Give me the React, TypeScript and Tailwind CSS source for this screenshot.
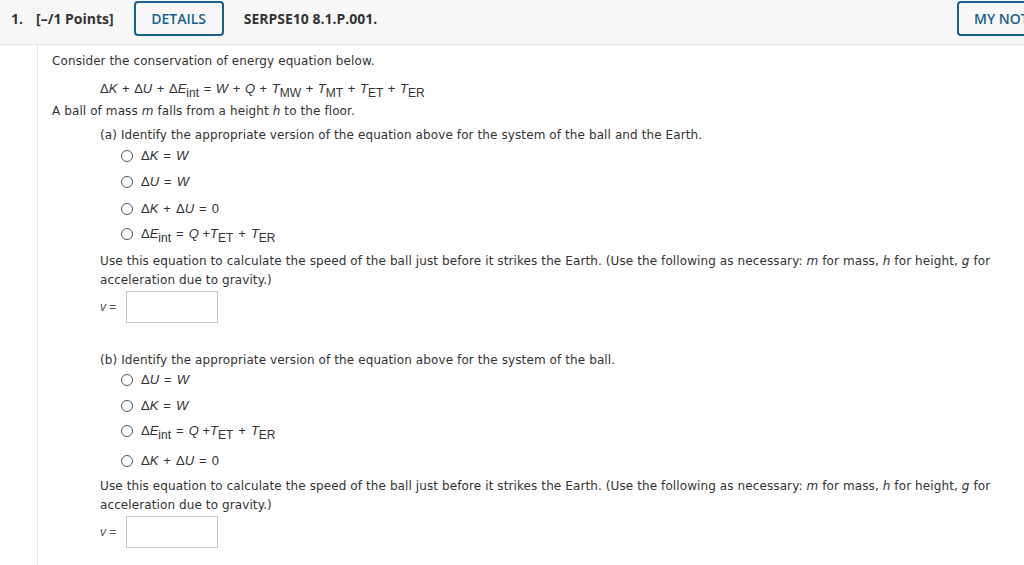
import React from "react";

const body = { fontFamily: '"DejaVu Sans", Verdana, sans-serif' };
const mathF = { fontFamily: '"Liberation Sans", Arial, sans-serif' };

function I({ children }: { children: React.ReactNode }) {
  return <span className="italic">{children}</span>;
}
function Sub({ children }: { children: React.ReactNode }) {
  return <span className="text-[12px] not-italic relative top-[4px]">{children}</span>;
}
function M({ children }: { children: React.ReactNode }) {
  return (
    <span className="text-[13px] text-[#333] leading-[19px]" style={mathF}>
      {children}
    </span>
  );
}
const Op = ({ c }: { c: string }) => <span className="mx-[5px]">{c}</span>;
const Ops = ({ c }: { c: string }) => <span className="mx-[4.6px]">{c}</span>;

function Radio({ children, mt }: { children: React.ReactNode; mt: string }) {
  return (
    <div className={`flex items-center h-[19px] ${mt}`}>
      <span className="w-[12px] h-[12px] rounded-full border border-[#555] ml-[21px] mr-[8px] bg-white shrink-0" />
      <M>{children}</M>
    </div>
  );
}

const DK = () => (<>Δ<I>K</I></>);
const DU = () => (<>Δ<I>U</I></>);
const W = () => <I>W</I>;
const Eint = () => (<>Δ<I>E</I><Sub>int</Sub></>);
const TQ = () => (<><I>Q</I> +<I>T</I><Sub>ET</Sub><Op c="+" /><I>T</I><Sub>ER</Sub></>);

function UseText() {
  return (
    <div className="leading-[19px] pr-[20px] tracking-[0.1px]">
      Use this equation to calculate the speed of the ball just before it strikes the Earth. (Use the following as necessary: <I>m</I> for mass, <I>h</I> for height, <I>g</I> for acceleration due to gravity.)
    </div>
  );
}

function Answer({ mt }: { mt: string }) {
  return (
    <div className={`flex items-center ${mt}`}>
      <span className="w-[26px] text-[12px] text-[#555]" style={mathF}>
        <I>v</I> =
      </span>
      <div className="w-[92px] h-[32px] border border-[#c8c8c8] bg-white" />
    </div>
  );
}

export default function App() {
  return (
    <div className="w-[1024px] h-[565px] overflow-hidden bg-white text-[#333]" style={body}>
      <div
        className="h-[45px] bg-[#f7f7f7] border-b border-[#e4e4e4] flex items-start relative"
        style={{ fontFamily: '"Open Sans", sans-serif' }}
      >
        <div className="flex items-center h-[35px] mt-[1px] text-[14px] font-bold text-[#333]">
          <span className="ml-[11px]">1.</span>
          <span className="ml-[13px]">[–/1 Points]</span>
          <div className="ml-[20px] w-[90px] h-[35px] shrink-0 border-2 border-[#1b5f8c] rounded-[4px] flex items-center justify-center text-[#1b5f8c] font-semibold text-[14px]">
            DETAILS
          </div>
          <span className="ml-[20px]">SERPSE10 8.1.P.001.</span>
        </div>
        <div className="absolute left-[957px] top-[1px] w-[120px] h-[35px] border-2 border-[#1b5f8c] rounded-[4px] flex items-center pl-[15px] text-[#1b5f8c] font-semibold text-[14px] whitespace-nowrap">
          MY NOTES
        </div>
      </div>
      <div className="flex h-[520px]">
        <div className="w-[38px] border-r border-[#e4e4e4] shrink-0" />
        <div className="pl-[14px] text-[12px] flex-1">
          <div className="leading-[19px] mt-[7px] tracking-[0.1px]">Consider the conservation of energy equation below.</div>
          <div className="h-[19px] mt-[8px] ml-[48px] flex items-center">
            <M>
              <DK /><Ops c="+" /><DU /><Ops c="+" /><Eint /><Ops c="=" /><W /><Ops c="+" /><I>Q</I><Ops c="+" /><I>T</I><Sub>MW</Sub><Ops c="+" /><I>T</I><Sub>MT</Sub><Ops c="+" /><I>T</I><Sub>ET</Sub><Ops c="+" /><I>T</I><Sub>ER</Sub>
            </M>
          </div>
          <div className="leading-[19px] mt-[4px] tracking-[0.1px]">
            A ball of mass <I>m</I> falls from a height <I>h</I> to the floor.
          </div>
          <div className="ml-[48px]">
            <div className="leading-[19px] mt-[5px] tracking-[0.1px]">(a) Identify the appropriate version of the equation above for the system of the ball and the Earth.</div>
            <Radio mt="mt-[1px]"><DK /><Op c="=" /><W /></Radio>
            <Radio mt="mt-[7px]"><DU /><Op c="=" /><W /></Radio>
            <Radio mt="mt-[8px]"><DK /><Op c="+" /><DU /><Op c="=" />0</Radio>
            <Radio mt="mt-[6px]"><Eint /><Op c="=" /><TQ /></Radio>
            <div className="mt-[9px]"><UseText /></div>
            <Answer mt="mt-[1px]" />
            <div className="leading-[19px] mt-[28px] tracking-[0.1px]">(b) Identify the appropriate version of the equation above for the system of the ball.</div>
            <Radio mt="mt-[0px]"><DU /><Op c="=" /><W /></Radio>
            <Radio mt="mt-[7px]"><DK /><Op c="=" /><W /></Radio>
            <Radio mt="mt-[6px]"><Eint /><Op c="=" /><TQ /></Radio>
            <Radio mt="mt-[11px]"><DK /><Op c="+" /><DU /><Op c="=" />0</Radio>
            <div className="mt-[7px]"><UseText /></div>
            <Answer mt="mt-[1px]" />
          </div>
        </div>
      </div>
    </div>
  );
}
